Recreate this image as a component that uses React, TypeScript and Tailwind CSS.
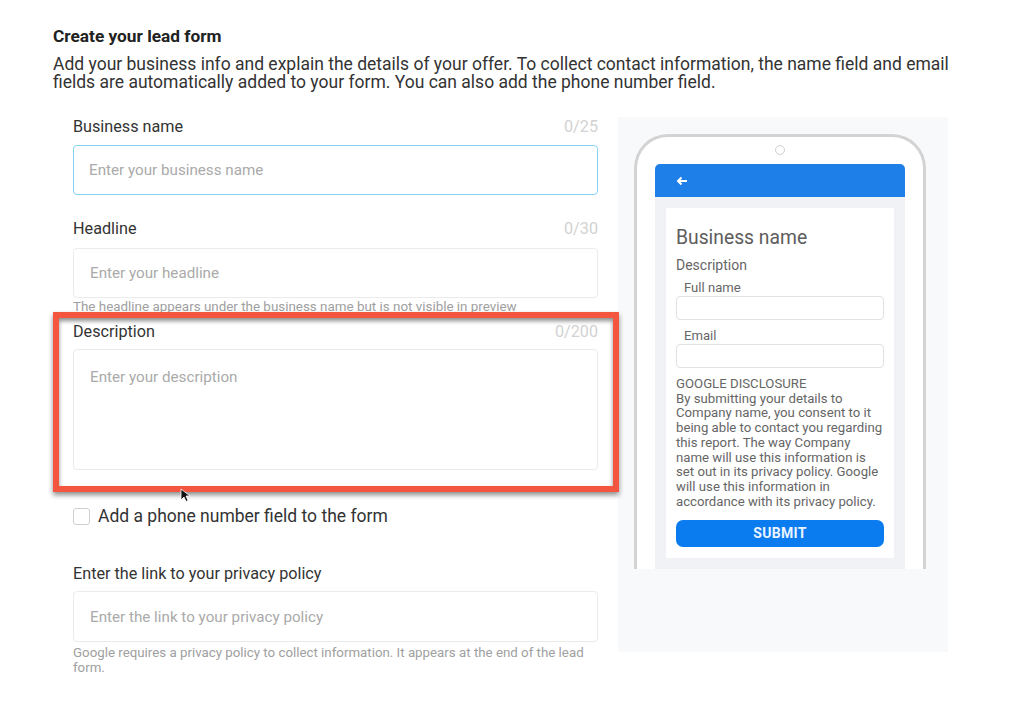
import React from 'react'

function FieldLabel({ label, count }: { label: string; count?: string }) {
  return (
    <div className="flex justify-between text-[16.2px] leading-[20px]">
      <span className="text-[#333]">{label}</span>
      {count && <span className="text-[#d2d2d2]">{count}</span>}
    </div>
  )
}

function PhonePreview() {
  return (
    <div className="w-[330px] h-[535px] ml-[20px] bg-[#f8f9fb] pl-[16px] pt-[17px]">
      <div className="w-[292px] h-[435px] border-t-[3px] border-x-[3px] border-[#d3d3d3] rounded-t-[34px] bg-white flex flex-col px-[18px]">
        <div className="mx-auto mt-[8px] w-[10px] h-[10px] rounded-full border-[1.5px] border-[#cfcfcf]" />
        <div className="mt-[9px] h-[33px] bg-[#1e7fe8] rounded-t-[5px] flex items-center pl-[21px]">
          <svg width="12" height="10" viewBox="0 0 12 10" fill="none" stroke="white" strokeWidth="2">
            <path d="M11 5H2M5.5 1.5L2 5l3.5 3.5" />
          </svg>
        </div>
        <div className="flex-1 bg-[#f1f2f5] px-[11px] py-[11px]">
          <div className="h-full bg-white px-[10px] pt-[19px] text-[#666]">
            <div className="text-[19.3px] leading-[22px] text-[#5c5c5c]">Business name</div>
            <div className="mt-[8px] text-[14px] leading-[16px]">Description</div>
            <div className="mt-[8px] pl-[8px] text-[13.1px] leading-[14px]">Full name</div>
            <div className="mt-[1px] h-[24px] border border-[#e2e2e2] rounded-[4px]" />
            <div className="mt-[9px] pl-[8px] text-[13.1px] leading-[14px]">Email</div>
            <div className="mt-[1px] h-[24px] border border-[#e2e2e2] rounded-[4px]" />
            <div className="mt-[9px] text-[13.2px] leading-[14.7px] whitespace-nowrap">
              GOOGLE DISCLOSURE
              <br />
              By submitting your details to
              <br />
              Company name, you consent to it
              <br />
              being able to contact you regarding
              <br />
              this report. The way Company
              <br />
              name will use this information is
              <br />
              set out in its privacy policy. Google
              <br />
              will use this information in
              <br />
              accordance with its privacy policy.
            </div>
            <div className="mt-[11px] h-[27px] rounded-[7px] bg-[#0b7cf0] flex items-center justify-center text-[14px] font-bold text-[#eaf3ff] tracking-[0.3px]">
              SUBMIT
            </div>
          </div>
        </div>
      </div>
    </div>
  )
}

export default function App() {
  return (
    <div className="min-h-screen bg-white font-['Roboto',sans-serif] pl-[53px] pt-[26px]">
      <h1 className="text-[17.3px] leading-[20px] font-bold text-[#222]">Create your lead form</h1>
      <p className="mt-[9px] text-[17.5px] leading-[18px] text-[#333] whitespace-nowrap">
        Add your business info and explain the details of your offer. To collect contact information, the name field and email
        <br />
        fields are automatically added to your form. You can also add the phone number field.
      </p>

      <div className="mt-[26px] flex">
        <div className="ml-[20px] w-[525px]">
          <FieldLabel label="Business name" count="0/25" />
          <input
            readOnly
            placeholder="Enter your business name"
            className="mt-[8px] w-full h-[50px] border-[1.5px] border-[#86d3f5] rounded-[4px] px-[15px] text-[15.2px] placeholder:text-[#aaa] outline-none"
          />

          <div className="mt-[24px]">
            <FieldLabel label="Headline" count="0/30" />
          </div>
          <input
            readOnly
            placeholder="Enter your headline"
            className="mt-[9px] w-full h-[50px] border border-[#ebebeb] rounded-[4px] px-[16px] text-[15.2px] placeholder:text-[#aaa] outline-none"
          />
          <div className="mt-[1px] text-[13.4px] leading-[16px] text-[#a0a0a0] whitespace-nowrap">
            The headline appears under the business name but is not visible in preview
          </div>

          <div className="relative mt-[7px]">
            <FieldLabel label="Description" count="0/200" />
            <textarea
              readOnly
              placeholder="Enter your description"
              className="block mt-[7px] w-full h-[121px] border border-[#ebebeb] rounded-[4px] px-[16px] pt-[16px] text-[15.2px] placeholder:text-[#aaa] outline-none resize-none"
            />
            <div className="pointer-events-none absolute -left-[20px] -right-[21px] -top-[10px] -bottom-[22px] border-[6px] border-[#f4553f] shadow-[0_3px_5px_rgba(0,0,0,0.45),inset_0_3px_4px_rgba(0,0,0,0.45)]" />
            <svg className="absolute left-[107px] top-[166px]" width="10" height="14" viewBox="0 0 10 14">
              <path d="M1 1v11l3-3 2 4.5 2-1-2-4.5h4z" fill="#111" stroke="white" strokeWidth="0.8" />
            </svg>
          </div>

          <div className="mt-[36px] h-[20px] flex items-center gap-[8px]">
            <div className="w-[17px] h-[17px] border border-[#cfcfcf] rounded-[3px] bg-white" />
            <span className="text-[17.5px] text-[#333]">Add a phone number field to the form</span>
          </div>

          <div className="mt-[38px]">
            <FieldLabel label="Enter the link to your privacy policy" />
          </div>
          <input
            readOnly
            placeholder="Enter the link to your privacy policy"
            className="mt-[7px] w-full h-[51px] border border-[#ebebeb] rounded-[4px] px-[16px] text-[15.2px] placeholder:text-[#aaa] outline-none"
          />
          <div className="mt-[3px] text-[13.3px] leading-[15px] text-[#a0a0a0]">
            Google requires a privacy policy to collect information. It appears at the end of the lead form.
          </div>
        </div>

        <PhonePreview />
      </div>
    </div>
  )
}
